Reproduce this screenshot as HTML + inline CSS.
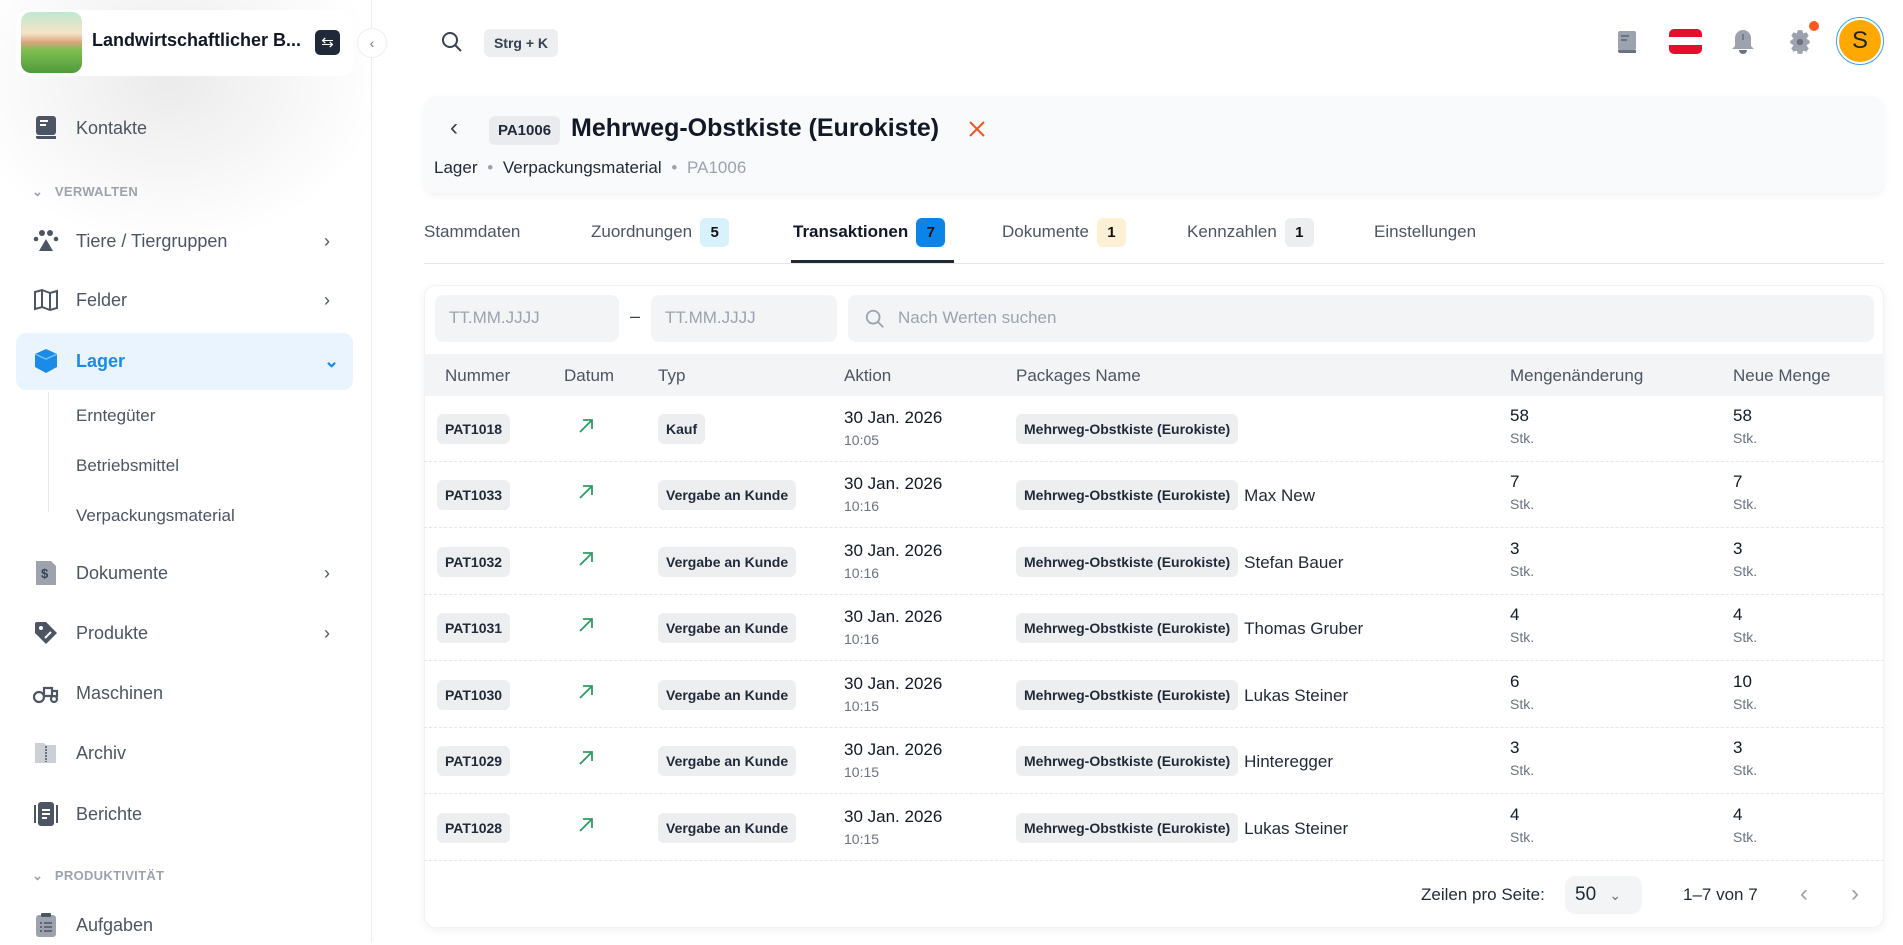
<!DOCTYPE html>
<html><head><meta charset="utf-8"><style>
*{box-sizing:border-box;margin:0;padding:0}
body{width:1903px;height:942px;overflow:hidden;background:#fff;font-family:"Liberation Sans",sans-serif;color:#1f2937;position:relative}
.abs{position:absolute}
.side{position:absolute;left:0;top:0;width:372px;height:942px;border-right:1px solid #eceef1;background:#fff}
.glow{position:absolute;left:-60px;top:-40px;width:460px;height:300px;background:radial-gradient(ellipse at 50% 40%,rgba(0,0,0,.08),rgba(0,0,0,0) 65%)}
.hcard{position:absolute;left:16px;top:10px;width:337px;height:66px;background:#fff;border-radius:12px}
.nav{position:absolute;left:0;width:372px;height:40px;display:flex;align-items:center;font-size:18px;color:#4b5563}
.nav .ic{position:absolute;left:32px;width:28px;height:28px;display:flex;align-items:center;justify-content:center}
.nav .tx{position:absolute;left:76px}
.nav .ch{position:absolute;left:324px;color:#4b5563;font-size:18px}
.sec{position:absolute;left:32px;font-size:13px;font-weight:bold;color:#9ca3af;letter-spacing:.3px}
.sub{position:absolute;left:76px;font-size:17px;color:#4b5563}
.bdg{display:inline-block;background:#eceef0;border-radius:6px;font-weight:bold;font-size:14px;padding:0 8px;height:30px;line-height:30px;color:#1f2937}
.tab{position:absolute;top:222px;font-size:17px;color:#4b5563}
.tb{display:inline-block;width:29px;height:29px;border-radius:6px;text-align:center;line-height:29px;font-size:15px;font-weight:bold;margin-left:8px;vertical-align:middle}
.row{position:absolute;left:424px;width:1460px;height:66px;border-bottom:1px dashed #e5e7eb}
.row>div{position:absolute}
.c1{left:13px;top:18px}.c2{left:152px;top:20px}.c3{left:234px;top:18px}
.c4{left:420px;top:12px;font-size:17px;color:#111827}
.c4 small{display:block;font-size:14px;color:#6b7280;margin-top:4px}
.c5{left:592px;top:18px;font-size:17px;white-space:nowrap}
.c5 span.n{margin-left:6px;vertical-align:middle}
.c6,.c7{top:10px;font-size:17px;color:#111827}
.c6{left:1086px}.c7{left:1309px}
.c6 small,.c7 small{display:block;font-size:14px;color:#6b7280;margin-top:4px}
.th{position:absolute;top:366px;font-size:17px;color:#4b5563}
</style></head><body>
<div class="side">
<div class="glow"></div>
<div class="hcard"></div>
<div class="abs" style="left:21px;top:12px;width:61px;height:61px;border-radius:10px;overflow:hidden;background:linear-gradient(#bfe8d0 0%,#f6e4c8 35%,#d8a37c 50%,#7fbf52 62%,#4f9a3a 100%)"></div>
<div class="abs" style="left:92px;top:30px;font-size:18px;font-weight:bold;color:#111827">Landwirtschaftlicher B...</div>
<div class="abs" style="left:315px;top:30px;width:25px;height:25px;border-radius:5px;background:#1f2937;color:#fff;font-size:15px;text-align:center;line-height:25px">⇆</div>
<div class="abs" style="left:357px;top:28px;width:30px;height:30px;border-radius:50%;background:#fff;border:1px solid #eee;text-align:center;line-height:28px;color:#6b7280;font-size:14px">‹</div>

<div class="nav" style="top:108px"><div class="ic"><svg width="22" height="26" viewBox="0 0 22 26"><rect x="1" y="1" width="20" height="19" rx="3" fill="#4b5563"/><rect x="5" y="5" width="8" height="2" fill="#fff"/><rect x="5" y="9" width="6" height="2" fill="#fff"/><path d="M1 21h20v3H3a2 2 0 0 1-2-2z" fill="#4b5563"/></svg></div><span class="tx">Kontakte</span></div>
<div class="sec" style="top:184px">⌄&nbsp;&nbsp;&nbsp;VERWALTEN</div>
<div class="nav" style="top:221px"><div class="ic"><svg width="26" height="24" viewBox="0 0 26 24"><circle cx="9" cy="4" r="3" fill="#4b5563"/><circle cx="17" cy="4" r="3" fill="#4b5563"/><circle cx="3" cy="10" r="2.3" fill="#4b5563"/><circle cx="23" cy="10" r="2.3" fill="#4b5563"/><path d="M13 10l7 12H6z" fill="#4b5563"/></svg></div><span class="tx">Tiere / Tiergruppen</span><span class="ch">›</span></div>
<div class="nav" style="top:280px"><div class="ic"><svg width="26" height="24" viewBox="0 0 26 24" fill="none" stroke="#4b5563" stroke-width="2"><path d="M2 4l7-2 8 3 7-2v17l-7 2-8-3-7 2z M9 2v17 M17 5v17"/></svg></div><span class="tx">Felder</span><span class="ch">›</span></div>
<div class="abs" style="left:16px;top:333px;width:337px;height:57px;border-radius:10px;background:#eaf4fe"></div>
<div class="nav" style="top:341px;color:#1a8be6;font-weight:bold"><div class="ic"><svg width="26" height="26" viewBox="0 0 26 26"><path d="M13 1l11 5v13l-11 6-11-6V6z" fill="#1a8be6"/><path d="M2 6l11 5 11-5" fill="none" stroke="#7cc0f5" stroke-width="1.5"/></svg></div><span class="tx">Lager</span><span class="ch" style="color:#1a8be6">⌄</span></div>
<div class="abs" style="left:48px;top:392px;width:1px;height:120px;background:#e5e7eb"></div>
<div class="sub" style="top:406px">Erntegüter</div>
<div class="sub" style="top:456px">Betriebsmittel</div>
<div class="sub" style="top:506px">Verpackungsmaterial</div>
<div class="nav" style="top:553px"><div class="ic"><svg width="24" height="26" viewBox="0 0 24 26"><path d="M2 1h15l5 5v19H2z" fill="#9ca3af"/><text x="7" y="18" font-size="13" font-weight="bold" fill="#374151" font-family="Liberation Sans">$</text></svg></div><span class="tx">Dokumente</span><span class="ch">›</span></div>
<div class="nav" style="top:613px"><div class="ic"><svg width="26" height="26" viewBox="0 0 26 26"><path d="M2 4a2 2 0 0 1 2-2h9l11 11-11 11L2 13z" fill="#4b5563"/><circle cx="8" cy="8" r="2" fill="#fff"/><path d="M12 18l6-6" stroke="#fff" stroke-width="2"/></svg></div><span class="tx">Produkte</span><span class="ch">›</span></div>
<div class="nav" style="top:673px"><div class="ic"><svg width="28" height="22" viewBox="0 0 28 22" fill="none" stroke="#4b5563" stroke-width="2.2"><circle cx="7" cy="15" r="5"/><circle cx="22" cy="17" r="3"/><path d="M12 14h8V6h-8z M20 9h5v6" /></svg></div><span class="tx">Maschinen</span></div>
<div class="nav" style="top:733px"><div class="ic"><svg width="24" height="24" viewBox="0 0 24 24"><path d="M1 2h9l2 2h10v18H1z" fill="#cbd0d6"/><path d="M12 5v16" stroke="#4b5563" stroke-width="1.5" stroke-dasharray="2 1"/></svg></div><span class="tx">Archiv</span></div>
<div class="nav" style="top:794px"><div class="ic"><svg width="26" height="26" viewBox="0 0 26 26"><rect x="5" y="1" width="16" height="24" rx="3" fill="#4b5563"/><rect x="1" y="4" width="2" height="18" fill="#4b5563"/><rect x="23" y="4" width="2" height="18" fill="#4b5563"/><rect x="9" y="8" width="8" height="2" fill="#fff"/><rect x="9" y="12" width="8" height="2" fill="#fff"/><rect x="9" y="16" width="5" height="2" fill="#fff"/></svg></div><span class="tx">Berichte</span></div>
<div class="sec" style="top:868px">⌄&nbsp;&nbsp;&nbsp;PRODUKTIVITÄT</div>
<div class="nav" style="top:905px"><div class="ic"><svg width="24" height="26" viewBox="0 0 24 26"><rect x="2" y="3" width="20" height="22" rx="3" fill="#9ca3af"/><rect x="7" y="1" width="10" height="4" rx="1" fill="#4b5563"/><path d="M6 11h2M10 11h8M6 15h2M10 15h8M6 19h2M10 19h8" stroke="#4b5563" stroke-width="1.6"/></svg></div><span class="tx">Aufgaben</span></div>
</div>

<!-- top bar -->
<svg class="abs" style="left:440px;top:30px" width="24" height="24" viewBox="0 0 24 24" fill="none" stroke="#374151" stroke-width="2"><circle cx="10" cy="10" r="7"/><path d="M15 15l6 6"/></svg>
<div class="abs" style="left:484px;top:29px;width:74px;height:28px;border-radius:6px;background:#eceef0;font-size:14px;font-weight:bold;color:#374151;text-align:center;line-height:28px">Strg + K</div>
<svg class="abs" style="left:1617px;top:30px" width="20" height="25" viewBox="0 0 20 25"><rect x="1" y="1" width="18" height="19" rx="2" fill="#9ca3af"/><rect x="4" y="5" width="8" height="2" fill="#6b7280"/><rect x="4" y="9" width="6" height="2" fill="#6b7280"/><path d="M1 20h18v3H3a2 2 0 0 1-2-2z" fill="#6b7280"/></svg>
<div class="abs" style="left:1669px;top:29px;width:33px;height:25px;border-radius:5px;overflow:hidden;background:#e3102d"><div style="margin-top:8px;height:8px;background:#fff"></div></div>
<svg class="abs" style="left:1730px;top:29px" width="26" height="26" viewBox="0 0 26 26"><path d="M13 1a8 8 0 0 1 8 8v8l3 3H2l3-3V9a8 8 0 0 1 8-8z" fill="#9ca3af"/><path d="M9 21a4 4 0 0 0 8 0z" fill="#6b7280"/><path d="M13 5v6" stroke="#6b7280" stroke-width="1.6"/></svg>
<svg class="abs" style="left:1787px;top:29px" width="26" height="26" viewBox="0 0 24 24"><path d="M10 1h4l1 3 3-1 2 3-2 3 3 2v2l-3 2 2 3-2 3-3-1-1 3h-4l-1-3-3 1-2-3 2-3-3-2v-2l3-2-2-3 2-3 3 1z" fill="#9ca3af"/><circle cx="12" cy="12" r="3" fill="#6b7280"/></svg>
<div class="abs" style="left:1809px;top:21px;width:10px;height:10px;border-radius:50%;background:#ff5722"></div>
<div class="abs" style="left:1836px;top:17px;width:48px;height:48px;border-radius:50%;border:1px solid #3aa1ec;padding:2px;background:#fff"><div style="width:42px;height:42px;border-radius:50%;background:#ffa800;text-align:center;line-height:42px;font-size:24px;color:#222">S</div></div>

<!-- header card -->
<div class="abs" style="left:424px;top:96px;width:1460px;height:97px;border-radius:12px;background:#f9fafb;box-shadow:0 3px 8px rgba(0,0,0,.05)"></div>
<div class="abs" style="left:450px;top:114px;font-size:24px;color:#374151">‹</div>
<div class="abs" style="left:489px;top:116px;width:71px;height:29px;border-radius:6px;background:#e9ebee;font-size:15px;font-weight:bold;text-align:center;line-height:29px">PA1006</div>
<div class="abs" style="left:571px;top:114px;font-size:25px;font-weight:bold;color:#111827">Mehrweg-Obstkiste (Eurokiste)</div>
<svg class="abs" style="left:968px;top:120px" width="18" height="18" viewBox="0 0 18 18" stroke="#f4511e" stroke-width="2"><path d="M2 2l14 14M16 2L2 16"/></svg>
<div class="abs" style="left:434px;top:158px;font-size:17px;color:#1f2937">Lager <span style="color:#9ca3af;margin:0 5px">•</span> Verpackungsmaterial <span style="color:#9ca3af;margin:0 5px">•</span> <span style="color:#9ca3af">PA1006</span></div>

<!-- tabs -->
<div class="tab" style="left:424px">Stammdaten</div>
<div class="tab" style="left:591px;top:218px">Zuordnungen<span class="tb" style="background:#d7f2fa;color:#111">5</span></div>
<div class="tab" style="left:793px;top:218px;color:#111827;font-weight:bold">Transaktionen<span class="tb" style="background:#0a84e8;color:#111">7</span></div>
<div class="tab" style="left:1002px;top:218px">Dokumente<span class="tb" style="background:#fdf0d5;color:#111">1</span></div>
<div class="tab" style="left:1187px;top:218px">Kennzahlen<span class="tb" style="background:#eceef0;color:#111">1</span></div>
<div class="tab" style="left:1374px">Einstellungen</div>
<div class="abs" style="left:424px;top:263px;width:1460px;height:1px;background:#e5e7eb"></div>
<div class="abs" style="left:791px;top:260px;width:163px;height:3px;background:#1f2937"></div>

<!-- table card -->
<div class="abs" style="left:424px;top:285px;width:1460px;height:643px;border-radius:12px;background:#fff;box-shadow:0 2px 10px rgba(0,0,0,.06);border:1px solid #f1f2f4"></div>
<div class="abs" style="left:435px;top:295px;width:184px;height:47px;border-radius:8px;background:#f3f4f6;font-size:17px;color:#9ca3af;padding:13px 14px">TT.MM.JJJJ</div>
<div class="abs" style="left:630px;top:306px;font-size:18px;color:#374151">–</div>
<div class="abs" style="left:651px;top:295px;width:186px;height:47px;border-radius:8px;background:#f3f4f6;font-size:17px;color:#9ca3af;padding:13px 14px">TT.MM.JJJJ</div>
<div class="abs" style="left:848px;top:295px;width:1026px;height:47px;border-radius:8px;background:#f3f4f6;font-size:17px;color:#9ca3af;padding:13px 0 0 50px">Nach Werten suchen</div>
<svg class="abs" style="left:864px;top:308px" width="22" height="22" viewBox="0 0 24 24" fill="none" stroke="#9ca3af" stroke-width="2"><circle cx="10" cy="10" r="7"/><path d="M15 15l6 6"/></svg>
<div class="abs" style="left:424px;top:354px;width:1460px;height:42px;background:#f3f4f6"></div>
<div class="th" style="left:445px">Nummer</div>
<div class="th" style="left:564px">Datum</div>
<div class="th" style="left:658px">Typ</div>
<div class="th" style="left:844px">Aktion</div>
<div class="th" style="left:1016px">Packages Name</div>
<div class="th" style="left:1510px">Mengenänderung</div>
<div class="th" style="left:1733px">Neue Menge</div>

<div class="row" style="top:396px"><div class="c1 bdg">PAT1018</div><div class="c2"><svg width="20" height="20" viewBox="0 0 20 20" stroke="#2e9c61" stroke-width="1.8" fill="none"><path d="M4 16L16 4M7 4h9v9"/></svg></div><div class="c3 bdg">Kauf</div><div class="c4">30 Jan. 2026<small>10:05</small></div><div class="c5"><span class="bdg">Mehrweg-Obstkiste (Eurokiste)</span></div><div class="c6">58<small>Stk.</small></div><div class="c7">58<small>Stk.</small></div></div>
<div class="row" style="top:462px"><div class="c1 bdg">PAT1033</div><div class="c2"><svg width="20" height="20" viewBox="0 0 20 20" stroke="#2e9c61" stroke-width="1.8" fill="none"><path d="M4 16L16 4M7 4h9v9"/></svg></div><div class="c3 bdg">Vergabe an Kunde</div><div class="c4">30 Jan. 2026<small>10:16</small></div><div class="c5"><span class="bdg">Mehrweg-Obstkiste (Eurokiste)</span><span class="n">Max New</span></div><div class="c6">7<small>Stk.</small></div><div class="c7">7<small>Stk.</small></div></div>
<div class="row" style="top:529px"><div class="c1 bdg">PAT1032</div><div class="c2"><svg width="20" height="20" viewBox="0 0 20 20" stroke="#2e9c61" stroke-width="1.8" fill="none"><path d="M4 16L16 4M7 4h9v9"/></svg></div><div class="c3 bdg">Vergabe an Kunde</div><div class="c4">30 Jan. 2026<small>10:16</small></div><div class="c5"><span class="bdg">Mehrweg-Obstkiste (Eurokiste)</span><span class="n">Stefan Bauer</span></div><div class="c6">3<small>Stk.</small></div><div class="c7">3<small>Stk.</small></div></div>
<div class="row" style="top:595px"><div class="c1 bdg">PAT1031</div><div class="c2"><svg width="20" height="20" viewBox="0 0 20 20" stroke="#2e9c61" stroke-width="1.8" fill="none"><path d="M4 16L16 4M7 4h9v9"/></svg></div><div class="c3 bdg">Vergabe an Kunde</div><div class="c4">30 Jan. 2026<small>10:16</small></div><div class="c5"><span class="bdg">Mehrweg-Obstkiste (Eurokiste)</span><span class="n">Thomas Gruber</span></div><div class="c6">4<small>Stk.</small></div><div class="c7">4<small>Stk.</small></div></div>
<div class="row" style="top:662px"><div class="c1 bdg">PAT1030</div><div class="c2"><svg width="20" height="20" viewBox="0 0 20 20" stroke="#2e9c61" stroke-width="1.8" fill="none"><path d="M4 16L16 4M7 4h9v9"/></svg></div><div class="c3 bdg">Vergabe an Kunde</div><div class="c4">30 Jan. 2026<small>10:15</small></div><div class="c5"><span class="bdg">Mehrweg-Obstkiste (Eurokiste)</span><span class="n">Lukas Steiner</span></div><div class="c6">6<small>Stk.</small></div><div class="c7">10<small>Stk.</small></div></div>
<div class="row" style="top:728px"><div class="c1 bdg">PAT1029</div><div class="c2"><svg width="20" height="20" viewBox="0 0 20 20" stroke="#2e9c61" stroke-width="1.8" fill="none"><path d="M4 16L16 4M7 4h9v9"/></svg></div><div class="c3 bdg">Vergabe an Kunde</div><div class="c4">30 Jan. 2026<small>10:15</small></div><div class="c5"><span class="bdg">Mehrweg-Obstkiste (Eurokiste)</span><span class="n">Hinteregger</span></div><div class="c6">3<small>Stk.</small></div><div class="c7">3<small>Stk.</small></div></div>
<div class="row" style="top:795px"><div class="c1 bdg">PAT1028</div><div class="c2"><svg width="20" height="20" viewBox="0 0 20 20" stroke="#2e9c61" stroke-width="1.8" fill="none"><path d="M4 16L16 4M7 4h9v9"/></svg></div><div class="c3 bdg">Vergabe an Kunde</div><div class="c4">30 Jan. 2026<small>10:15</small></div><div class="c5"><span class="bdg">Mehrweg-Obstkiste (Eurokiste)</span><span class="n">Lukas Steiner</span></div><div class="c6">4<small>Stk.</small></div><div class="c7">4<small>Stk.</small></div></div>

<div class="abs" style="left:1421px;top:885px;font-size:17px;color:#1f2937">Zeilen pro Seite:</div>
<div class="abs" style="left:1565px;top:876px;width:77px;height:38px;border-radius:10px;background:#f3f4f6;font-size:19px;padding:8px 0 0 10px;color:#1f2937">50 <span style="font-size:14px;color:#6b7280;margin-left:8px">⌄</span></div>
<div class="abs" style="left:1683px;top:885px;font-size:17px;color:#1f2937">1–7 von 7</div>
<div class="abs" style="left:1800px;top:880px;font-size:24px;color:#9ca3af">‹</div>
<div class="abs" style="left:1851px;top:880px;font-size:24px;color:#9ca3af">›</div>
</body></html>
